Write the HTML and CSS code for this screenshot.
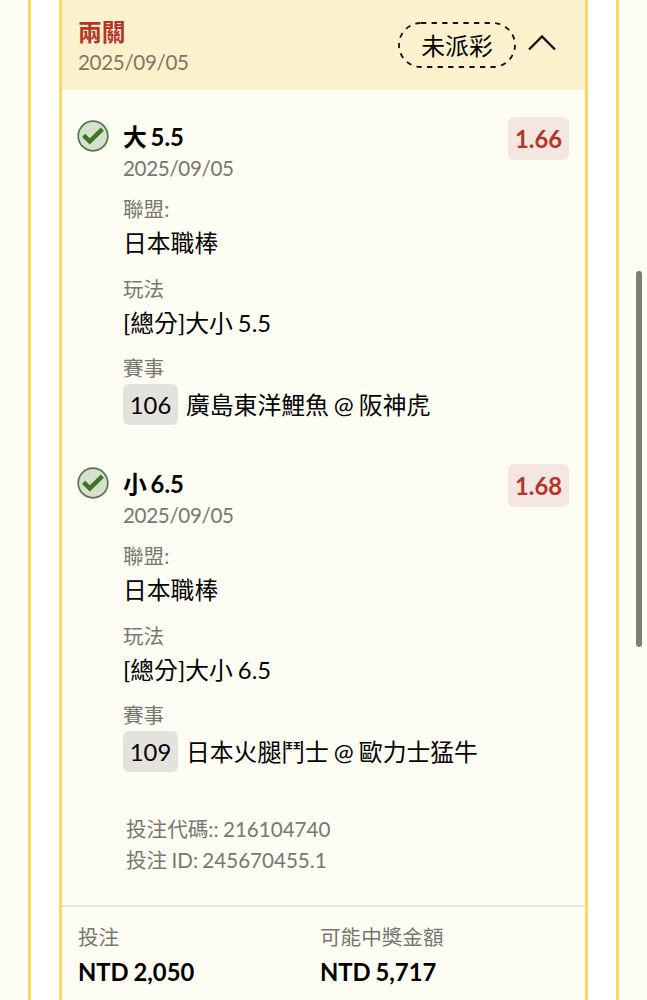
FILE: index.html
```html
<!DOCTYPE html>
<html lang="zh-Hant">
<head>
<meta charset="utf-8">
<meta name="viewport" content="initial-scale=1.0, width=device-width">
<title>投注</title>
<link rel="stylesheet" href="styles.css">
</head>
<body>

<div class="panel">
<div class="ticket">

  <div class="head">
    <div class="head-text">
      <h1>兩關</h1>
      <div class="date">2025/09/05</div>
    </div>
    <div class="status">
      <svg class="pill" viewBox="0 0 118 46">
        <rect x="1" y="1" width="116" height="44" rx="22" />
      </svg>
      <span>未派彩</span>
    </div>
    <svg class="chevron" viewBox="0 0 28 16">
      <path d="M1 14.5 L14 1.5 L27 14.5" />
    </svg>
  </div>

  <div class="leg">
    <svg class="check" viewBox="0 0 32 32">
      <circle cx="16" cy="16" r="14.8" />
      <path d="M6.6 15.4 L12.8 21.4 L25.4 9.2" />
    </svg>
    <div class="info">
      <h2>大 5.5</h2>
      <div class="date">2025/09/05</div>
      <div class="field">
        <div class="label">聯盟:</div>
        <div class="value">日本職棒</div>
      </div>
      <div class="field">
        <div class="label">玩法</div>
        <div class="value">[總分]大小 5.5</div>
      </div>
      <div class="field">
        <div class="label">賽事</div>
        <div class="match"><span class="num">106</span>廣島東洋鯉魚 @ 阪神虎</div>
      </div>
    </div>
    <div class="odds">1.66</div>
  </div>

  <div class="leg">
    <svg class="check" viewBox="0 0 32 32">
      <circle cx="16" cy="16" r="14.8" />
      <path d="M6.6 15.4 L12.8 21.4 L25.4 9.2" />
    </svg>
    <div class="info">
      <h2>小 6.5</h2>
      <div class="date">2025/09/05</div>
      <div class="field">
        <div class="label">聯盟:</div>
        <div class="value">日本職棒</div>
      </div>
      <div class="field">
        <div class="label">玩法</div>
        <div class="value">[總分]大小 6.5</div>
      </div>
      <div class="field">
        <div class="label">賽事</div>
        <div class="match"><span class="num">109</span>日本火腿鬥士 @ 歐力士猛牛</div>
      </div>
    </div>
    <div class="odds">1.68</div>
  </div>

  <div class="codes">
    <div>投注代碼:: 216104740</div>
    <div>投注 ID: 245670455.1</div>
  </div>

  <div class="totals">
    <div>
      <div class="label">投注</div>
      <div class="amount">NTD 2,050</div>
    </div>
    <div>
      <div class="label">可能中獎金額</div>
      <div class="amount">NTD 5,717</div>
    </div>
  </div>

</div>
</div>

<div class="scrollbar"></div>

</body>
</html>
```
FILE: styles.css
```css
html,body,div,h1,h2,svg{margin:0;padding:0;}
*{box-sizing:border-box;}
html{overflow:hidden;}
body{
  height:1000px;
  overflow:hidden;
  color:#000;
  font-size:23.8px;
  font-family:Lato,"Noto Sans CJK TC",sans-serif;
  word-spacing:-1px;
  background:#fefdf4;
  padding:0 28px;
}
svg{display:block;flex:none;}
.panel{
  width:591px;
  height:1000px;
  padding:0 28px;
  background:#fff;
  border:solid #f4db66;
  border-width:0 3px;
}
.ticket{
  height:1000px;
  background:#fefdf4;
  border:solid #f8d967;
  border-width:0 3px;
}
.head{
  display:flex;
  align-items:flex-start;
  height:90px;
  padding:17px 29px 0 16px;
  background:#fcf1cd;
}
.head-text{flex:1;}
h1{color:#b5352a;font-size:23.8px;line-height:30px;font-weight:bold;}
h2{font-size:23.8px;line-height:31px;font-weight:bold;word-spacing:-2px;}
.date{color:#77776f;font-size:20.6px;line-height:30px;letter-spacing:-0.35px;}
.head .date{color:#7f7963;}
.status{
  position:relative;
  width:118px;
  margin-top:5px;
  line-height:48px;
  text-align:center;
}
.pill{
  position:absolute;
  left:0;
  top:0;
  width:118px;
  height:46px;
  fill:none;
  stroke:#111;
  stroke-width:1.8px;
  stroke-dasharray:5.3 5.3;
}
.chevron{
  width:28px;
  height:16px;
  margin:18px 0 0 12px;
  fill:none;
  stroke:#111;
  stroke-width:2.3px;
}
.leg{
  display:flex;
  align-items:flex-start;
  height:347px;
  padding:27px 16px 0 15px;
}
.check{width:32px;height:32px;margin-top:3px;}
.check circle{fill:#d5e1cd;stroke:#52784a;stroke-width:1.7px;}
.check path{fill:none;stroke:#3f7426;stroke-width:4.4px;}
.info{flex:1;margin:5px 0 0 14px;}
.field{height:79.5px;}
.date + .field{margin-top:11px;}
.label{color:#77776f;font-size:20.6px;line-height:31px;}
.value{line-height:36px;}
.match{display:flex;line-height:42px;white-space:nowrap;}
.num{
  width:55px;
  height:41px;
  margin-right:8px;
  text-align:center;
  border-radius:6px;
  background:#e3e2dc;
}
.odds{
  width:61px;
  height:43px;
  line-height:44px;
  text-align:center;
  font-weight:bold;
  color:#b5352a;
  border-radius:6px;
  background:#f4e6e0;
}
.codes{
  height:121px;
  padding:30px 0 0 64px;
  color:#77776f;
  font-size:20.6px;
  line-height:31px;
}
.totals{
  display:grid;
  grid-template-columns:242px 1fr;
  padding:15px 16px 0;
  border-top:2px solid #e8e7df;
}
.amount{line-height:38px;font-weight:bold;}
.scrollbar{
  position:absolute;
  left:636px;
  top:271px;
  width:6px;
  height:376px;
  border-radius:3px;
  background:#7e7e79;
}
```
